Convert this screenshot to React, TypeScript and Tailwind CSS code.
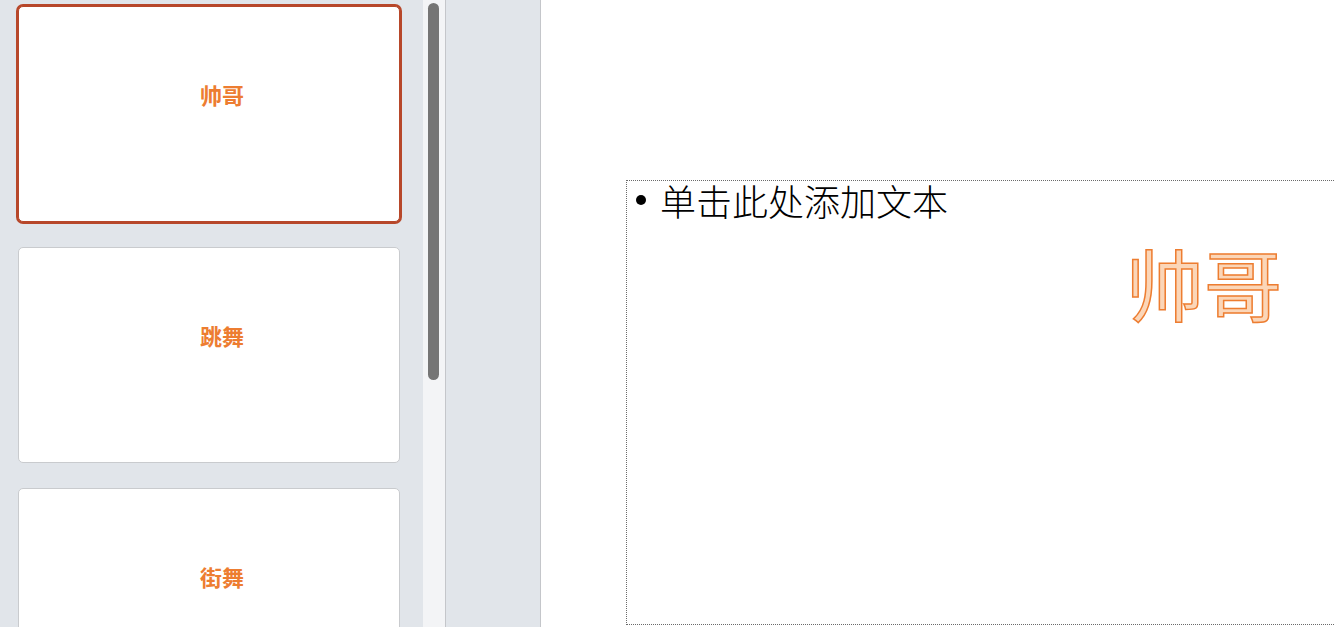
import React from "react";

const cjk = "font-['Noto_Sans_CJK_SC','Noto_Sans',sans-serif]";

function Thumb({ label, selected }: { label: string; selected?: boolean }) {
  return (
    <div
      className={
        "w-[382px] h-[216px] shrink-0 bg-white rounded-[5px] border flex justify-center items-start pl-[26px] pt-[76px] " +
        (selected
          ? "border-[#b7472a] ring-2 ring-[#b7472a]"
          : "border-[#c9cbce]")
      }
    >
      <span className={cjk + " text-[22px] leading-none font-bold text-[#ed7d31]"}>{label}</span>
    </div>
  );
}

export default function App() {
  return (
    <div className="flex h-[627px] w-[1334px] overflow-hidden bg-white">
      <div className="w-[423px] shrink-0 bg-[#e1e5ea] pl-[18px] pt-[6px] flex flex-col gap-[25px] overflow-hidden">
        <Thumb label="帅哥" selected />
        <Thumb label="跳舞" />
        <Thumb label="街舞" />
      </div>
      <div className="w-[22px] shrink-0 bg-[#f3f4f6] pt-[3px] pl-[5px]">
        <div className="w-[11px] h-[377px] rounded-full bg-[#757575]" />
      </div>
      <div className="w-px shrink-0 bg-[#c4c6ca]" />
      <div className="w-[94px] shrink-0 bg-[#e1e5ea]" />
      <div className="w-px shrink-0 bg-[#c4c6ca]" />
      <div className="relative flex-1 bg-white overflow-hidden">
        <div className="absolute left-[85px] top-[180px] w-[900px] h-[445px] border border-dotted border-[#6b6b6b] pl-[9px]">
          <div className={cjk + " flex items-center gap-[14px] text-[36px] leading-[44px] -mt-[3px] text-black font-light"}>
            <span className="w-[10px] h-[10px] rounded-full bg-black shrink-0" />
            <span>单击此处添加文本</span>
          </div>
        </div>
        <div
          className={
            cjk +
            " absolute left-[585px] top-[243px] text-[78px] leading-none font-normal text-[#fbd6b8] [-webkit-text-stroke:1.5px_#ed7d31]"
          }
        >
          帅哥
        </div>
      </div>
    </div>
  );
}
